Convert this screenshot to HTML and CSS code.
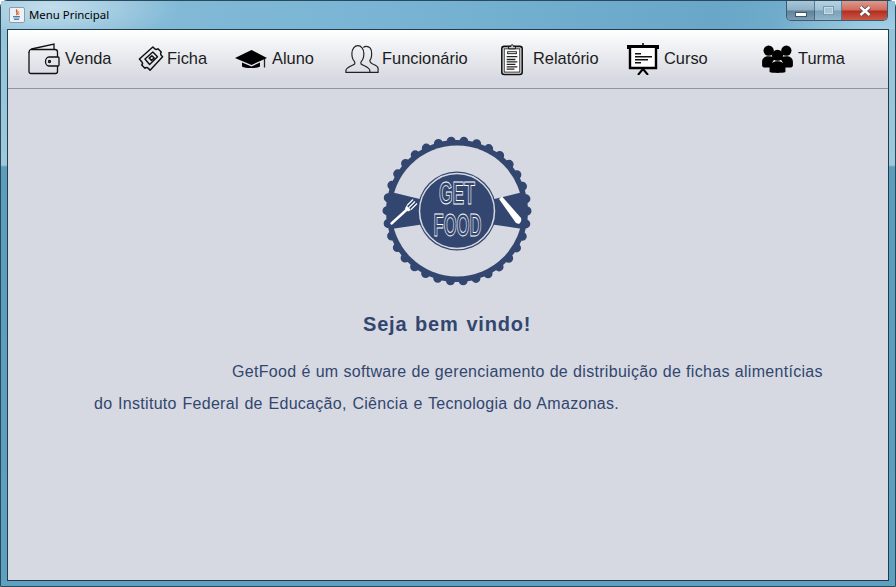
FILE: index.html
```html
<!DOCTYPE html>
<html lang="pt">
<head>
<meta charset="utf-8">
<title>Menu Principal</title>
<link rel="stylesheet" href="styles.css">
</head>
<body>
<div class="window">
  <header class="titlebar">
    <svg class="java" viewBox="0 0 16 16"><rect x=".5" y=".5" width="15" height="15" rx="1.500" fill="#eef1f6" stroke="#8d9bb0"/><path d="M8 2.500C6 5 10 5.500 7.500 8" fill="none" stroke="#d9541e" stroke-width="1.500"/><path d="M10 4C8.500 5.500 11 6 9.500 8" fill="none" stroke="#e58a3c"/><path d="M4 9.500h7M4.500 11h6M5 12.500h5" stroke="#4f7eaf" fill="none"/></svg>
    <span class="wintitle">Menu Principal</span>
    <div class="controls">
      <span class="ctl ctl-min"><i></i></span>
      <span class="ctl ctl-max"><i></i></span>
      <span class="ctl ctl-close"><svg viewBox="0 0 14 12" width="14" height="12"><path d="M2.500 2l9 8M11.500 2l-9 8" stroke="#4b4b55" stroke-width="4" fill="none"/><path d="M2.500 2l9 8M11.500 2l-9 8" stroke="#fff" stroke-width="2.400" fill="none"/></svg></span>
    </div>
  </header>
  <main class="client">
    <nav class="toolbar">
      <div class="item"><svg class="ico ico-wallet" viewBox="0 0 33 32"><g fill="none" stroke="#111" stroke-width="1.300"><path d="M1 9.500C1 7.500 2 6.500 3.500 6L26 1v5.500"/><path d="M3 6.500h24c1.500 0 2.500 1 2.500 2.500v5M29.500 23v5.500c0 1.200-.8 2-2 2H3c-1.200 0-2-.8-2-2V9"/><path d="M30 14h-9c-2 0-3.500 2-3.500 4.500S19 23 21 23h9c.5 0 1-.5 1-1v-7c0-.5-.5-1-1-1z"/><circle cx="21.500" cy="18.500" r="1"/></g></svg><span>Venda</span></div>
      <div class="item"><svg class="ico ico-ticket" viewBox="0 2 28 28"><g fill="none" stroke="#111" stroke-width="1.600" stroke-linejoin="round"><path d="M1.500 16L16 3l2 2c1 1 2.500.6 3.500 0l3.500 3.500c-.8 1.200-.8 2.300 0 3.500l1.500 1.500L13 28l-2-2c-1-1-2.500-1-3.500 0L4 22.500c1-1 1-2.500 0-3.500z"/><path d="M7.500 16L16 8.500l5 5L12.500 22z"/><path d="M12 15l3-2.500 2.500 2.500-3 2.500z"/></g></svg><span>Ficha</span></div>
      <div class="item"><svg class="ico ico-cap" viewBox="0 0 33 32"><path d="M0 15L16.500 7 32 15l-15.500 7z" fill="#000"/><path d="M7 19.500v4c3 2 15 2 18 0v-4l-8.500 4z" fill="#000"/><path d="M29.500 16v8.500" stroke="#222" stroke-width="1.300"/></svg><span>Aluno</span></div>
      <div class="item"><svg class="ico ico-people" viewBox="0 0 37 32"><g fill="none" stroke="#222" stroke-width="1.300"><path d="M1 30.500v-2c0-3.500 7-5 9.500-7 .5-1 .3-2.300-.5-3.200-1.500-1.500-2.500-5-2.500-8.300C7.500 5 10.500 1.500 14 1.500S20.500 5 20.500 10c0 3.300-1 6.800-2.500 8.300-.8.900-1 2.200-.5 3.200 2.500 2 9.500 3.500 9.500 7v2z"/><path d="M20 3.500c1-.8 2-1.200 3-1.200 4 0 6 3.500 6 7.700 0 3.500-.8 6.300-2 7.500 0 2.500 2 3.500 5 4.800 2 .9 4 2 4 4v4.200h-9"/></g></svg><span>Funcionário</span></div>
      <div class="item"><svg class="ico ico-clip" viewBox="0 0 23 34"><rect x="1" y="3.500" width="21" height="29" rx="2.500" fill="#e8e8e8" stroke="#111" stroke-width="1.600"/><rect x="3.500" y="6" width="16" height="24" fill="#fff" stroke="#333"/><path d="M8 6V3.500h2.500c0-2.500 2-2.500 2.500 0H15V6z" fill="#ccc" stroke="#111"/><rect x="7" y="9" width="9" height="2" fill="none" stroke="#222"/><path d="M6 14h11M6 17h9M6 19.500h11M6 22h9M6 24.500h11M6 27h8" stroke="#222" stroke-width="1.300"/></svg><span>Relatório</span></div>
      <div class="item"><svg class="ico ico-board" viewBox="0 0 33 32"><path d="M16 0v3" stroke="#000" stroke-width="1.500"/><rect x="0" y="2" width="32" height="4" fill="#000"/><path d="M3 5v20h26V5" fill="#fff" stroke="#000" stroke-width="2.400"/><path d="M8 10h6v1.500H8zM8 13h17v1.500H8zM8 16h13v1.500H8zM8 19h6v1.500H8z" fill="#111"/><path d="M16 25v3M16 26l-5 6M16 26l5 6" stroke="#000" stroke-width="2"/></svg><span>Curso</span></div>
      <div class="item"><svg class="ico ico-group" viewBox="0 0 33 30"><circle cx="7" cy="6" r="5.500"/><circle cx="26" cy="6" r="5.500"/><path d="M0 22v-4c0-4 3-6 7-6s6 1 7 3c-3 2-4 5-4 9H2c-1 0-2-1-2-2zM33 22v-4c0-4-3-6-7-6s-6 1-7 3c3 2 4 5 4 9h8c1 0 2-1 2-2z"/><circle cx="16.500" cy="11" r="6"/><path d="M8 29v-5c0-4 4-6.500 8.500-6.500S25 20 25 24v5c-3 1.300-14 1.300-17 0z"/></svg><span>Turma</span></div>
    </nav>
    <section class="welcome">
      <svg class="logo" viewBox="0 0 150 150">
        <circle class="logo-bumps" cx="75" cy="75" r="70"/>
        <circle cx="75" cy="75" r="71" fill="#32466f"/>
        <circle cx="75" cy="75" r="65.500" fill="#d6d9e1"/>
        <path d="M9 56L50 66V87L9 93z" fill="#32466f"/>
        <path d="M141 56L100 66V87L141 93z" fill="#32466f"/>
        <circle cx="75" cy="75" r="39.500" fill="#32466f"/>
        <circle cx="75" cy="75" r="37.500" fill="none" stroke="#d6d9e1" stroke-width="1.500"/>
        <path d="M9.500 87.500L26 72.500" stroke="#fff" stroke-width="2.400" stroke-linecap="round"/>
        <path d="M25 69.500l6-6M27 71.500l6-6M29 73.500l6-6" stroke="#fff" stroke-width="1.100" fill="none"/>
        <path d="M24.500 69.500l4.500 4.500-3 1.500-3-3z" fill="#fff"/>
        <path d="M117 63l3-2.500L139 82q1 4-2 6l-3-1z" fill="#fff"/>
        <text class="deco" x="57" y="68" textLength="36" lengthAdjust="spacingAndGlyphs">GET</text>
        <text class="deco" x="51.500" y="100" textLength="48" lengthAdjust="spacingAndGlyphs">FOOD</text>
      </svg>
      <h1 class="greet">Seja bem vindo!</h1>
      <p class="about">
        <span class="about-first">GetFood é um software de gerenciamento de distribuição de fichas alimentícias</span>
        <span class="about-second">do Instituto Federal de Educação, Ciência e Tecnologia do Amazonas.</span>
      </p>
    </section>
  </main>
</div>
</body>
</html>
```

FILE: styles.css
```css
* { box-sizing: border-box; }
html, body { margin: 0; height: 100%; }
body { background: #fff; overflow: hidden; font-family: "Liberation Sans", Arial, sans-serif; }
.window {
  height: 587px;
  display: flex;
  flex-direction: column;
  border: 1px solid #2a4a5c;
  border-radius: 7px 7px 0 0;
  background: linear-gradient(#93c3da 0, #9ec8db 164px, #5c9dbd 166px, #5f9fbf 100%);
  padding: 0 6px 5px;
}
.titlebar {
  height: 28px;
  margin: 0 -6px;
  padding: 0 7px 0 8px;
  display: flex;
  align-items: center;
  flex: none;
  background:
    radial-gradient(ellipse 130px 40px at 50px 6px, rgba(255,255,255,.5), rgba(255,255,255,0)),
    radial-gradient(ellipse 110px 50px at 880px 30px, rgba(200,230,245,.55), rgba(200,230,245,0)),
    linear-gradient(90deg, #88bdd8 0, #7ab5d5 40%, #69a6c7 80%, #7cb5d2 100%);
}
.java { width: 16px; height: 16px; flex: none; }
.wintitle { font-family: "Noto Sans", sans-serif; font-size: 11.400px; color: #000; margin: -2px 0 0 4px; }
.controls {
  margin-left: auto;
  align-self: flex-start;
  display: flex;
  height: 20px;
  border: 1px solid #3c5a70;
  border-top: 0;
  border-radius: 0 0 5px 5px;
  overflow: hidden;
}
.ctl { display: flex; align-items: center; justify-content: center; height: 100%; border-right: 1px solid rgba(50,80,100,.6); }
.ctl-min { width: 28px; background: linear-gradient(#a9c6d8 0, #8fb0c6 48%, #5f8199 52%, #7c9db3 100%); }
.ctl-min i { display: block; width: 12px; height: 5px; margin-top: 7px; background: #fff; border: 1px solid #40586a; }
.ctl-max { width: 27px; background: linear-gradient(#b5d2e2 0, #9ec0d4 48%, #79a1b9 52%, #92b6ca 100%); }
.ctl-max i { display: block; width: 11px; height: 9px; margin-bottom: 1px; border: 1px solid #7d97aa; background: #a8c5d6; box-shadow: inset 0 0 0 1px #c6dce8; }
.ctl-close { width: 45px; border-right: 0; background: linear-gradient(#dd9a8e 0, #cf6a5c 48%, #b32c1e 52%, #c95a48 100%); }
.client {
  flex: 1;
  display: flex;
  flex-direction: column;
  border: 1px solid #1f3d4d;
  background: #d6d9e1;
  min-height: 0;
}
.toolbar {
  height: 59px;
  flex: none;
  display: grid;
  grid-template-columns: 110px 97px 110px 155px 127px 133px 1fr;
  align-items: center;
  padding-left: 20px;
  background: linear-gradient(#fff 0, #f4f5f7 20%, #d6d9e1 85%);
  border-bottom: 1px solid #92959c;
}
.item { display: flex; align-items: center; font-size: 16.400px; color: #1c1c1c; }
.item span { position: relative; top: -1px; }
.ico { flex: none; fill: #000; }
.ico-wallet { width: 33px; height: 32px; margin-right: 4px; }
.ico-ticket { width: 26px; height: 26px; margin-right: 3px; }
.ico-cap { width: 33px; height: 32px; margin-right: 4px; }
.ico-people { width: 34px; height: 30px; margin-right: 3px; }
.ico-clip { width: 24px; height: 33px; margin-right: 9px; }
.ico-board { width: 33px; height: 32px; margin-right: 4px; }
.ico-group { width: 33px; height: 28px; margin-right: 4px; margin-left: 1px; }
.welcome { flex: 1; display: flex; flex-direction: column; align-items: flex-start; padding-top: 47px; }
.logo { width: 150px; height: 150px; display: block; flex: none; margin-left: 374px; }
.logo-bumps { fill: none; stroke: #32466f; stroke-width: 9px; stroke-linecap: round; stroke-dasharray: 0 12.936; }
.deco { font-family: "Liberation Sans", sans-serif; font-weight: 700; font-size: 31px; fill: none; stroke: #fff; stroke-width: .9px; }
.greet { margin: 26px 0 0 355px; font-size: 20px; line-height: 24px; letter-spacing: .8px; word-spacing: 1.400px; font-weight: 700; color: #32466f; }
.about {
  margin: 20px 0 0 86px;
  font-size: 16px;
  line-height: 32px;
  letter-spacing: .3px;
  color: #32466f;
  white-space: nowrap;
}
.about-first { display: block; padding-left: 138px; word-spacing: .3px; }
.about-second { display: block; word-spacing: .9px; }
```
